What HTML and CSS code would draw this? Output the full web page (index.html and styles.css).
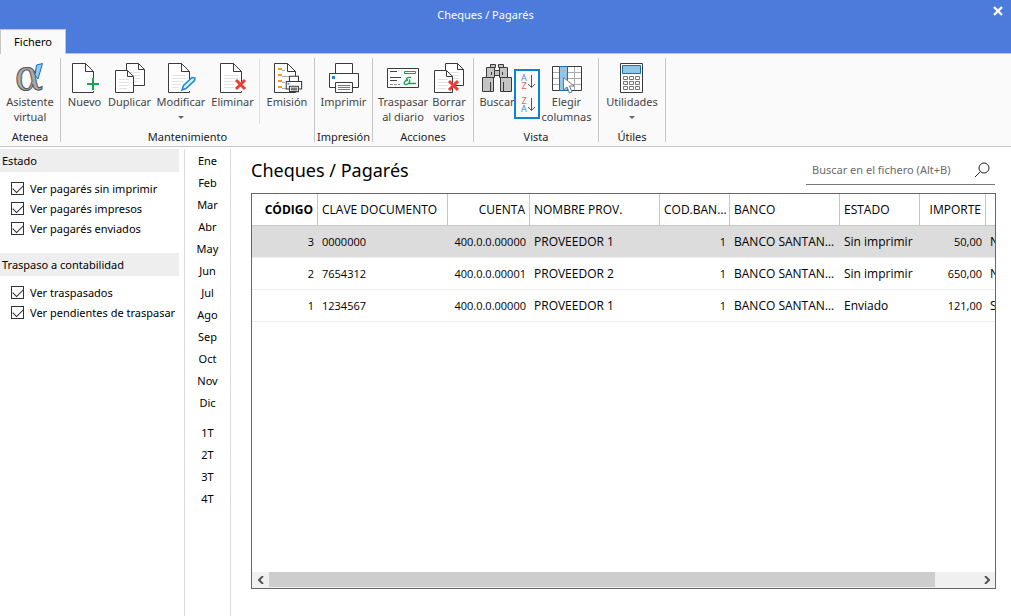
FILE: index.html
```html
<!DOCTYPE html>
<html lang="es">
<head>
<meta charset="utf-8">
<title>Cheques / Pagarés</title>
<link rel="stylesheet" href="styles.css">
</head>
<body>
<svg class="defs" aria-hidden="true">
  <defs>
    <g id="page" stroke="#3a3a3a" fill="none">
      <path d="M21.500 21V9.500L13.500 1.500H.5V30.500H21.500V29" fill="#fff"/>
      <path d="M13.500 1.500V9.500H21.500"/>
    </g>
    <g id="small-page">
      <path d="M.5.5H12.500L18.500 6.500V22.500H.5Z" fill="#fff" stroke="#3a3a3a"/>
      <path d="M12.500.5V6.500H18.500" fill="none" stroke="#3a3a3a"/>
      <path d="M4 9.500H14M4 12.500H14M4 15.500H14M4 18.500H12" stroke="#e2e2e2"/>
    </g>
    <g id="cross"><path d="M1 1L10 10M10 1L1 10" stroke="#ee3b38" stroke-width="3" fill="none"/></g>
    <g id="printer" fill="#fff" stroke="#3a3a3a">
      <path d="M6.500 10V.5H23.500V10"/>
      <path d="M.5 10.500H29.500V24.500H.5Z"/>
      <path d="M6.500 19.500H23.500V29.500H6.500Z"/>
      <path d="M9 22.500H21M9 24.500H21M9 26.500H21" stroke="#777"/>
      <path d="M3 13H6V16H3Z" fill="#1c87d6" stroke="none"/>
    </g>
  </defs>
</svg>
<div class="app">
  <header class="titlebar">
    <h1 class="window-title">Cheques / Pagarés</h1>
    <button class="close" aria-label="Cerrar"><svg width="10" height="10"><path d="M1 1L9 9M9 1L1 9" stroke="#fff" stroke-width="2.400"/></svg></button>
    <button class="tab">Fichero</button>
  </header>

  <nav class="ribbon">
    <section class="group atenea">
      <div class="tools">
        <button class="tool"><svg class="icon" width="32" height="32"><text class="alpha" x="15" y="28">α</text><path d="M22.500 3L28.500 1.500L24 17L21 13Z" fill="#8cc8f2" stroke="#1c6fb0"/></svg><span>Asistente<br>virtual</span></button>
      </div>
      <h2 class="group-name">Atenea</h2>
    </section>
    <section class="group mantenimiento">
      <div class="tools">
        <button class="tool nuevo"><svg class="icon" width="32" height="32"><use href="#page" x="3"/><path d="M24 16V28M18 22H30" stroke="#16a550" stroke-width="2"/></svg><span>Nuevo</span></button>
        <button class="tool duplicar"><svg class="icon" width="32" height="32"><use href="#small-page" x="12" y="1"/><use href="#small-page" x="1" y="8"/></svg><span>Duplicar</span></button>
        <button class="tool modificar"><svg class="icon" width="32" height="32"><use href="#page" x="3"/><path d="M7 13.500H21M7 16.500H21M7 19.500H18M7 22.500H16M7 25.500H14" stroke="#e2e2e2"/><path d="M17 28L18.500 23.500L27 15.500L30 16L29.500 18.500L21 26.500Z" fill="#d8edfb" stroke="#1c87d6" stroke-width="1.500"/></svg><span>Modificar</span><i class="arrow"></i></button>
        <button class="tool eliminar"><svg class="icon" width="32" height="32"><use href="#page" x="3"/><path d="M7 13.500H21M7 16.500H21M7 19.500H18M7 22.500H17M7 25.500H17" stroke="#e2e2e2"/><use href="#cross" x="18" y="17"/></svg><span>Eliminar</span></button>
        <button class="tool emision"><svg class="icon" width="32" height="32"><use href="#page" x="3"/><path d="M7 7H11M7 13H11M7 19H11M7 25H11" stroke="#f09a1a" stroke-width="2"/><path d="M11 8.500H14M11 14.500H20M11 20.500H14M11 26.500H15" stroke="#aaa"/><use href="#printer" transform="translate(15 14) scale(.53)" stroke-width="2"/></svg><span>Emisión</span></button>
      </div>
      <h2 class="group-name">Mantenimiento</h2>
    </section>
    <section class="group impresion">
      <div class="tools"><button class="tool"><svg class="icon" width="32" height="32"><use href="#printer" x="1" y="1"/></svg><span>Imprimir</span></button></div>
      <h2 class="group-name">Impresión</h2>
    </section>
    <section class="group acciones">
      <div class="tools">
        <button class="tool traspasar"><svg class="icon" width="32" height="32"><path d="M.5 6.500H31.500V25.500H.5Z" fill="#fff" stroke="#3a3a3a"/><path d="M3 9.500H10M3 15.500H14M3 18.500H10" stroke="#444"/><path d="M3 22.500H13" stroke="#888" stroke-dasharray="3 1"/><path d="M17.500 9.500H28.500V11.500H17.500Z" fill="none" stroke="#16a550"/><path d="M24 15.500C19 15 18 18 21 18C17 18.500 15.500 22.500 19 22.500C22 22.500 24 18 22 18M21 21.500H29" fill="none" stroke="#16a550" stroke-width="1.300"/></svg><span>Traspasar<br>al diario</span></button>
        <button class="tool borrar"><svg class="icon" width="32" height="32"><use href="#small-page" x="12" y="1"/><use href="#small-page" x="1" y="8"/><use href="#cross" x="15" y="18"/></svg><span>Borrar<br>varios</span></button>
      </div>
      <h2 class="group-name">Acciones</h2>
    </section>
    <section class="group vista">
      <div class="tools">
        <button class="tool buscar"><svg class="icon" width="32" height="32"><path d="M1.500 15.500H12.500V29.500H1.500ZM19.500 15.500H30.500V29.500H19.500ZM5.500 5.500H13.500V15.500H5.500ZM18.500 5.500H26.500V15.500H18.500ZM9.500 2.500H14.500V5.500H9.500ZM17.500 2.500H22.500V5.500H17.500ZM13.500 8.500H18.500V13.500H13.500Z" fill="#c4c4c4" stroke="#3a3a3a"/><path d="M9.500 20V29M22.500 20V29M10.500 10V13M21.500 10V13" stroke="#3a3a3a"/></svg><span>Buscar</span></button>
        <button class="sort" aria-label="Ordenar"><svg width="22" height="46"><text class="az a" x="8" y="10">A</text><text class="az z" x="8" y="18">Z</text><text class="az z" x="8" y="33">Z</text><text class="az a" x="8" y="41">A</text><path d="M15.500 4V16M12 13L15.500 16.500L19 13M15.500 27V39M12 36L15.500 39.500L19 36" fill="none" stroke="#555"/></svg></button>
        <button class="tool elegir"><svg class="icon" width="32" height="32"><path d="M1.500 4.500H30.500V28.500H1.500Z" fill="#fff" stroke="#3a3a3a"/><path d="M2 10.500H30M2 16.500H30M2 22.500H30M23.500 5V28" stroke="#aaa"/><path d="M8.500 4.500H16.500V28.500H8.500Z" fill="#8fc7ec" stroke="#1670b2"/><path d="M12.500 15.500V28L16 25L18.500 31L21 30L18.500 24H23Z" fill="#fff" stroke="#777"/></svg><span>Elegir<br>columnas</span></button>
      </div>
      <h2 class="group-name">Vista</h2>
    </section>
    <section class="group utiles">
      <div class="tools"><button class="tool"><svg class="icon" width="32" height="32"><path d="M4.500 1.500H26.500V30.500H4.500Z" fill="#fff" stroke="#3a3a3a"/><path d="M6.500 3.500H24.500V11.500H6.500Z" fill="#8fc7ec" stroke="#1670b2"/><path d="M7.500 14.500H11.500V17.500H7.500ZM13.500 14.500H17.500V17.500H13.500ZM19.500 14.500H23.500V17.500H19.500ZM7.500 19.500H11.500V22.500H7.500ZM13.500 19.500H17.500V22.500H13.500ZM19.500 19.500H23.500V22.500H19.500ZM7.500 24.500H11.500V27.500H7.500ZM13.500 24.500H17.500V27.500H13.500ZM19.500 24.500H23.500V27.500H19.500Z" fill="#fff" stroke="#777"/></svg><span>Utilidades</span><i class="arrow"></i></button></div>
      <h2 class="group-name">Útiles</h2>
    </section>
  </nav>

  <div class="body">
    <aside class="filters">
      <fieldset class="filter">
        <legend>Estado</legend>
        <label><input type="checkbox" checked>Ver pagarés sin imprimir</label>
        <label><input type="checkbox" checked>Ver pagarés impresos</label>
        <label><input type="checkbox" checked>Ver pagarés enviados</label>
      </fieldset>
      <fieldset class="filter">
        <legend>Traspaso a contabilidad</legend>
        <label><input type="checkbox" checked>Ver traspasados</label>
        <label><input type="checkbox" checked>Ver pendientes de traspasar</label>
      </fieldset>
    </aside>
    <nav class="periods">
      <div class="months"><button>Ene</button><button>Feb</button><button>Mar</button><button>Abr</button><button>May</button><button>Jun</button><button>Jul</button><button>Ago</button><button>Sep</button><button>Oct</button><button>Nov</button><button>Dic</button></div>
      <div class="quarters"><button>1T</button><button>2T</button><button>3T</button><button>4T</button></div>
    </nav>
    <main class="content">
      <div class="heading">
        <h2 class="page-title">Cheques / Pagarés</h2>
        <div class="search"><input type="text" placeholder="Buscar en el fichero (Alt+B)" aria-label="Buscar en el fichero"><svg width="16" height="16"><circle cx="10" cy="6" r="5" fill="none" stroke="#222"/><path d="M6.500 9.500L1 15" stroke="#222"/></svg></div>
      </div>
      <div class="grid">
        <div class="viewport">
          <table>
            <colgroup><col class="w66"><col class="w130"><col class="w82"><col class="w130"><col class="w70"><col class="w110"><col class="w80"><col class="w66"><col class="w80"></colgroup>
            <thead><tr><th class="num sorted">CÓDIGO</th><th>CLAVE DOCUMENTO</th><th class="num">CUENTA</th><th>NOMBRE PROV.</th><th class="tight">COD.BANCO</th><th>BANCO</th><th>ESTADO</th><th class="num">IMPORTE</th><th></th></tr></thead>
            <tbody>
              <tr class="selected"><td class="num">3</td><td class="key">0000000</td><td class="num">400.0.0.00000</td><td>PROVEEDOR 1</td><td class="num">1</td><td>BANCO SANTANDER</td><td>Sin imprimir</td><td class="num">50,00</td><td>No</td></tr>
              <tr><td class="num">2</td><td class="key">7654312</td><td class="num">400.0.0.00001</td><td>PROVEEDOR 2</td><td class="num">1</td><td>BANCO SANTANDER</td><td>Sin imprimir</td><td class="num">650,00</td><td>No</td></tr>
              <tr><td class="num">1</td><td class="key">1234567</td><td class="num">400.0.0.00000</td><td>PROVEEDOR 1</td><td class="num">1</td><td>BANCO SANTANDER</td><td>Enviado</td><td class="num">121,00</td><td>Sí</td></tr>
            </tbody>
          </table>
        </div>
        <div class="scrollbar">
          <button aria-label="Izquierda"><svg width="6" height="8"><path d="M5 0L1 4L5 8" fill="none" stroke="#555" stroke-width="2"/></svg></button>
          <div class="track"><div class="thumb"></div></div>
          <button aria-label="Derecha"><svg width="6" height="8"><path d="M1 0L5 4L1 8" fill="none" stroke="#555" stroke-width="2"/></svg></button>
        </div>
      </div>
    </main>
  </div>
</div>
</body>
</html>
```
FILE: styles.css
```css
* { box-sizing: border-box; }
body { margin: 0; font: 11px/15px "Noto Sans", "Open Sans", sans-serif; color: #000; background: #fff; }
button { font: inherit; color: inherit; background: none; border: 0; padding: 0; }
h1, h2 { margin: 0; font-size: inherit; font-weight: 400; }
.defs { position: absolute; width: 0; height: 0; }
.app { display: flex; flex-direction: column; min-height: 100vh; }
.titlebar { display: grid; grid-template-columns: 66px 1fr 66px; grid-template-rows: 29px 24px; background: #4d7bdb; border-bottom: 1px solid #b9c3d8; }
.window-title { grid-column: 1 / -1; grid-row: 1; justify-self: center; color: #fff; padding: 7px 40px 0 0; }
.close { grid-column: 3; grid-row: 1; justify-self: end; align-self: start; padding: 6px 8px; line-height: 0; }
.tab { grid-column: 1; grid-row: 2; height: 25px; padding-bottom: 2px; background: #fafafa; border: 1px solid #c6c6c6; border-bottom: 0; }
.ribbon { display: flex; height: 93px; padding: 4px 0; background: #fafafa; border-bottom: 1px solid #c6c6c6; }
.group { display: flex; flex-direction: column; justify-content: space-between; border-right: 1px solid #c6c6c6; }
.atenea { width: 61px; }
.mantenimiento { width: 254px; }
.impresion { width: 58px; }
.acciones { width: 101px; }
.vista { width: 125px; }
.utiles { width: 67px; }
.tools { display: flex; justify-content: center; align-items: flex-start; height: 66px; }
.tool { display: flex; flex-direction: column; align-items: center; flex: 1 1 0; min-width: 0; padding-top: 4px; color: #444; white-space: nowrap; }
.icon { display: block; flex: none; }
.group-name { text-align: center; line-height: 10px; color: #222; white-space: nowrap; }
.alpha { font: 42px "DejaVu Serif", serif; text-anchor: middle; fill: #aaa; stroke: #555; }
.az { font-size: 9px; text-anchor: middle; }
.a { fill: #3c94d0; }
.z { fill: #ee5a56; }
.nuevo { flex: 0 0 47px; }
.duplicar { flex: 0 0 43px; }
.modificar { flex: 0 0 60px; }
.eliminar { flex: 0 0 43px; }
.emision { flex: 1; border-left: 1px solid #e0e0e0; margin-left: 5px; height: 66px; justify-content: flex-start; }
.traspasar { flex: 0 0 52px; }
.borrar { flex: 0 0 40px; }
.arrow { border: 3px solid transparent; border-top-color: #666; border-bottom: 0; margin-top: 7px; }
.buscar { flex: 0 0 40px; padding-left: 6px; }
.sort { flex: 0 0 26px; height: 50px; margin-top: 11px; border: 2px solid #0a84cb; line-height: 0; }
.elegir { margin-right: 5px; }
.body { display: flex; flex: 1; }
.filters { flex: 0 0 184px; padding: 2px 5px 0 0; }
.filter { border: 0; margin: 0 0 15px; padding: 0; }
.filter legend { width: 100%; padding: 4px 2px; margin-bottom: 6px; background: #eee; }
.filter label { display: flex; align-items: center; gap: 6px; height: 20px; padding-left: 11px; padding-top: 1px; }
.filter input { appearance: none; width: 13px; height: 13px; margin: 0; border: 1px solid #333; display: grid; place-items: center; }
.filter input:checked::after { content: ""; width: 9px; height: 5px; border: solid #333; border-width: 0 0 1px 1px; transform: rotate(-45deg) translate(1px, -1px); }
.periods { flex: 0 0 47px; margin-top: 2px; border: solid #dcdcdc; border-width: 0 1px; }
.periods button { display: block; width: 100%; height: 22px; }
.quarters { margin-top: 8px; }
.content { flex: 1; min-width: 0; display: flex; flex-direction: column; padding: 8px 15px 27px 20px; }
.heading { display: flex; justify-content: space-between; align-items: flex-start; height: 38px; }
.page-title { font-size: 18px; line-height: 31px; }
.search { display: flex; align-items: center; width: 189px; height: 30px; margin-right: 1px; padding: 0 5px 0 6px; border-bottom: 1px solid #777; }
.search input { flex: 1; min-width: 0; border: 0; outline: 0; padding: 0; font: inherit; background: none; }
.search input::placeholder { color: #6a6a6a; opacity: 1; }
.grid { flex: 1; display: flex; flex-direction: column; border: 1px solid #666; min-height: 0; }
.viewport { flex: 1; overflow: hidden; }
table { width: 814px; table-layout: fixed; border-collapse: separate; border-spacing: 0; font: 12px/15px "Open Sans", "Noto Sans", sans-serif; }
.w66 { width: 66px; } .w130 { width: 130px; } .w82 { width: 82px; } .w70 { width: 70px; } .w110 { width: 110px; } .w80 { width: 80px; }
th, td { height: 32px; padding: 0 4px; overflow: hidden; text-overflow: ellipsis; white-space: nowrap; text-align: left; font-weight: 400; }
th { border: solid #c6c6c6; border-width: 0 1px 1px 0; }
td { border-bottom: 1px solid #eee; }
.num { text-align: right; }
td.num, td.key { font-size: 11px; }
th.tight { padding-right: 0; }
th.sorted { font-weight: 700; }
.selected td { background: #dcdcdc; }
.scrollbar { display: flex; height: 16px; background: #f0f0f0; }
.scrollbar button { flex: 0 0 17px; line-height: 0; }
.track { flex: 1; }
.thumb { width: 94%; height: 15px; background: #cdcdcd; }
```
